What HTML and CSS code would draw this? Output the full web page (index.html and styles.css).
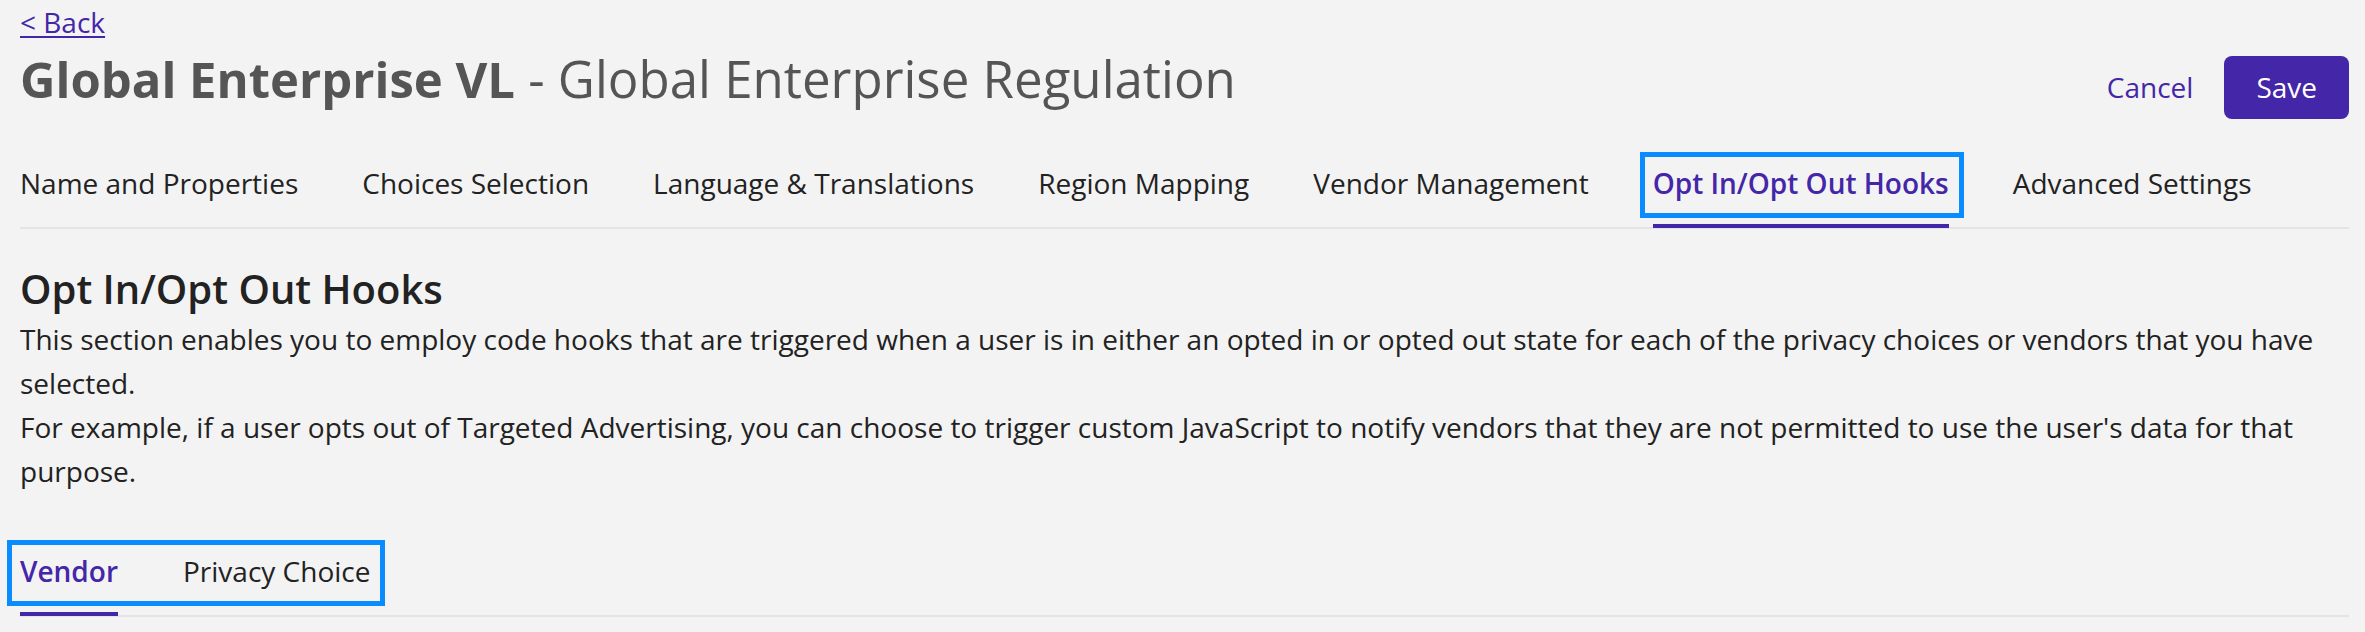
FILE: index.html
```html
<!DOCTYPE html>
<html lang="en">
<head>
<meta charset="utf-8">
<title>Opt In/Opt Out Hooks</title>
<link rel="stylesheet" href="styles.css">
</head>
<body>
<div class="page">
  <a class="back" href="#">&lt; Back</a>
  <div class="header">
    <h1 class="title"><strong>Global Enterprise VL</strong> - Global Enterprise Regulation</h1>
    <div class="actions">
      <button class="btn-link" type="button">Cancel</button>
      <button class="btn-primary" type="button">Save</button>
    </div>
  </div>
  <nav class="tabs main-tabs">
    <span class="tab">Name and Properties</span>
    <span class="tab">Choices Selection</span>
    <span class="tab">Language &amp; Translations</span>
    <span class="tab">Region Mapping</span>
    <span class="tab">Vendor Management</span>
    <span class="tab active marked">Opt In/Opt Out Hooks</span>
    <span class="tab">Advanced Settings</span>
  </nav>
  <h2 class="section-title">Opt In/Opt Out Hooks</h2>
  <p class="desc">This section enables you to employ code hooks that are triggered when a user is in either an opted in or opted out state for each of the privacy choices or vendors that you have selected.<br>For example, if a user opts out of Targeted Advertising, you can choose to trigger custom JavaScript to notify vendors that they are not permitted to use the user's data for that purpose.</p>
  <nav class="tabs subtabs">
    <div class="tab-group marked">
      <span class="tab active">Vendor</span>
      <span class="tab">Privacy Choice</span>
    </div>
  </nav>
</div>
</body>
</html>
```

FILE: styles.css
```css
* { box-sizing: border-box; }
html, body {
  margin: 0;
  padding: 0;
  background: #f3f3f3;
}
body {
  font-family: "Open Sans", "Liberation Sans", sans-serif;
  font-size: 28px;
  color: #222222;
}
.page {
  padding: 3px 16px 0 20px;
}
.back {
  display: inline-block;
  line-height: 38px;
  color: #4426a8;
  text-decoration: underline;
  text-underline-offset: 3px;
}
.header {
  margin-top: 8px;
  display: flex;
  align-items: baseline;
  justify-content: space-between;
}
.title {
  margin: 0;
  font-size: 51px;
  line-height: 58px;
  font-weight: 400;
  color: #555555;
}
.title strong {
  font-weight: 700;
  font-size: 49px;
}
.actions {
  display: flex;
  align-items: baseline;
  gap: 31px;
}
.btn-link, .btn-primary {
  font-family: inherit;
  font-size: 28px;
  line-height: 38px;
  border: 0;
  cursor: pointer;
}
.btn-link {
  background: none;
  padding: 0;
  color: #4426a8;
}
.btn-primary {
  background: #4426a8;
  color: #ffffff;
  padding: 12.5px 32px;
  border-radius: 8px;
}
.tabs {
  display: flex;
  gap: 64px;
  border-bottom: 2px solid #e4e4e4;
}
.main-tabs {
  margin-top: 21.5px;
}
.tab {
  position: relative;
  padding: 24px 0 25px;
  line-height: 38px;
  white-space: nowrap;
}
.tab.active {
  color: #4426a8;
  font-weight: 600;
}
.tab.active::before {
  content: "";
  position: absolute;
  left: 0;
  right: 0;
  bottom: -1px;
  height: 4px;
  background: #4426a8;
}
.marked { position: relative; }
.marked::after {
  content: "";
  position: absolute;
  top: 12px;
  bottom: 9px;
  left: -13px;
  right: -15px;
  border: 5px solid #0a8cff;
  pointer-events: none;
}
.section-title {
  margin: 35px 0 0;
  font-size: 40px;
  line-height: 50px;
  font-weight: 600;
  color: #222222;
}
.desc {
  margin: 3px 0 0;
  line-height: 44px;
  color: #222222;
}
.subtabs {
  margin-top: 35px;
}
.tab-group {
  display: flex;
  gap: 65px;
}
```
